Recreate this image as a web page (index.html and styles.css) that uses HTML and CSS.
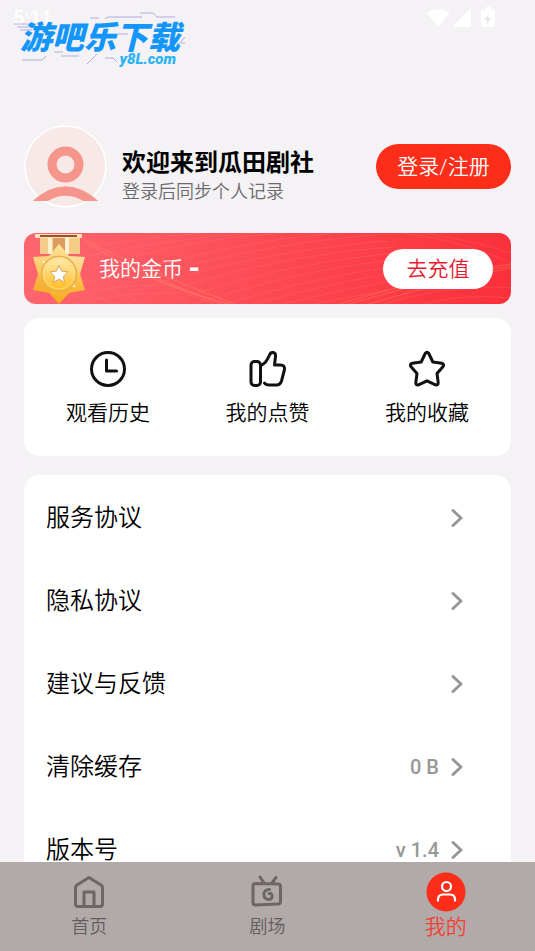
FILE: index.html
```html
<!DOCTYPE html>
<html lang="zh-CN">
<head>
<meta charset="utf-8">
<meta name="viewport" content="width=device-width, initial-scale=1">
<title>我的</title>
<link rel="stylesheet" href="styles.css">
</head>
<body>
<header class="status">
  <span class="status-time">5:11</span>
  <svg class="status-icons" width="70" height="22" viewBox="0 0 70 22" aria-hidden="true">
    <path d="M0 5Q11.500-3 23 5L11.500 19Z M44 0V19H25Z M55 2h4V-1h5v3h3q1 0 1 1v15q0 1-1 1H55q-1 0-1-1V3q0-1 1-1z" fill="#fff"/>
    <path d="M62 5l-5 7h3l-1 5 5-7h-3z" fill="#e9e7e9"/>
  </svg>
  <div class="watermark">
    <svg class="watermark-lines" width="174" height="54" viewBox="0 0 174 54" fill="none" stroke="#b3ace2" aria-hidden="true">
      <path d="M2 12h24M5 15h17M8 18h12M78 6h9M93 7l3-2h34M128 1h13l4 4h18M160 40l13-15M10 48h20l4-4M42 40h9M49 44h18M93 46h8l4 4M75 52l10-10M106 22h10M169 31h4"/>
    </svg>
    <span class="watermark-name">游吧乐下载</span>
    <span class="watermark-site">y8L.com</span>
  </div>
</header>
<main class="content">
  <section class="profile">
    <svg class="avatar" width="83" height="83" viewBox="0 0 83 83" aria-hidden="true">
      <defs><clipPath id="face"><rect width="83" height="76"/></clipPath></defs>
      <circle cx="41.500" cy="41.500" r="40.500" fill="#f8e9e9" stroke="#fff" stroke-width="1.500"/>
      <g fill="none" stroke="#f6958b">
        <circle cx="41.500" cy="39.500" r="13.500" stroke-width="9"/>
        <path d="M11 80Q41.500 52 72 80" stroke-width="9" clip-path="url(#face)"/>
      </g>
    </svg>
    <div class="profile-text">
      <h1 class="profile-title">欢迎来到瓜田剧社</h1>
      <p class="profile-note">登录后同步个人记录</p>
    </div>
    <button class="pill login" type="button">登录/注册</button>
  </section>

  <section class="coins">
    <svg class="coins-waves" viewBox="0 0 487 71" preserveAspectRatio="none" fill="none" aria-hidden="true">
      <g stroke="#ff8380" stroke-opacity=".25">
        <path d="M0 30Q90 5 180 0M0 38Q110 8 230 0M60 38Q160 5 260 0M80 46Q200 10 310 0M90 54Q220 12 350 2M110 58Q230 18 365 8M130 62Q250 22 370 14M150 67Q260 30 370 20M170 71Q270 38 365 27M200 71Q290 45 365 34M230 71Q300 52 362 41M260 71Q310 58 362 49M290 71Q330 63 365 57"/>
        <path d="M0 42Q50 52 90 71M0 50Q40 58 70 71M0 34Q70 46 120 71M60 20Q110 36 190 71M0 62Q70 42 130 44M20 71Q80 50 150 52M50 71Q100 58 160 60M380 0Q440 8 487 30M400 0Q450 8 487 20M360 71Q430 50 487 55M400 71Q440 60 487 65"/>
      </g>
      <g stroke="#ffa06c" stroke-opacity=".35">
        <path d="M58 5Q90 24 210 71M60 8Q100 35 198 71M120 42Q150 56 205 71M315 71Q420 40 487 31M325 71Q425 42 487 33M345 71Q430 46 487 35"/>
      </g>
    </svg>
    <svg class="medal" width="56" height="71" viewBox="0 0 56 71" aria-hidden="true">
      <defs>
        <linearGradient id="gold" x2="0" y2="1"><stop stop-color="#ffe39b"/><stop offset="1" stop-color="#f8aa18"/></linearGradient>
        <linearGradient id="disc" x2="0" y2="1"><stop stop-color="#ffedb5"/><stop offset="1" stop-color="#ffb91e"/></linearGradient>
      </defs>
      <path d="M9 3h40v18H9z" fill="#f5cb88"/>
      <path d="M17 3h4v18h-4zM34 3h4v18h-4z" fill="#fff1ce"/>
      <path d="M22 4h12v17H22z" fill="#dc9c61"/>
      <rect x="4" y="1" width="47" height="4" rx="1" fill="#ffe0b4"/>
      <path d="M9 2h37v2H9z" fill="#96522f"/>
      <path d="M28 11L38 23L54 24L49 41L54 57L38 60L28 71L18 60L2 57L7 41L2 24L18 23Z" fill="url(#gold)"/>
      <path d="M28 11L38 23L54 24L49 41Z" fill="#fff" opacity=".2"/>
      <path d="M28 71L18 60L2 57L7 41Z" fill="#ef9915" opacity=".25"/>
      <circle cx="28" cy="41" r="17.500" fill="url(#disc)" stroke="#e8b04f" stroke-width="1.500"/>
      <circle cx="28" cy="41" r="15" fill="none" stroke="#ffdf80"/>
      <path d="M28 32.500l2.700 5.600 6.200.8-4.500 4.300 1.100 6.100-5.500-3-5.500 3 1.100-6.100-4.500-4.300 6.200-.8z" fill="#fff" stroke="#dfa15a" stroke-linejoin="round"/>
      <circle cx="13" cy="29" r="1" fill="#fff"/><circle cx="43" cy="53" r="1" fill="#fff"/>
    </svg>
    <span class="coins-label">我的金币</span><strong class="coins-value">-</strong>
    <button class="pill recharge" type="button">去充值</button>
  </section>

  <nav class="card shortcuts">
    <a class="shortcut" href="#history">
      <svg class="line-icon" width="38" height="38" viewBox="0 0 38 38" aria-hidden="true"><circle cx="19" cy="19" r="16.500"/><path d="M17.500 10v11h10"/></svg>
      <span>观看历史</span>
    </a>
    <a class="shortcut" href="#likes">
      <svg class="line-icon" width="38" height="38" viewBox="0 0 38 38" aria-hidden="true"><rect x="2" y="11.500" width="9.500" height="24" rx="3.500"/><path d="M12 15.500c4.500-2 6.500-5.500 8.500-10.500 1.500-4 6.500-3 6 1.500L25.500 15h6c3 0 4.500 2 4 4.500L32.500 31c-1 3-2.500 4-5 4H20c-2.500 0-3.500-.5-4.500-2"/></svg>
      <span>我的点赞</span>
    </a>
    <a class="shortcut" href="#favorites">
      <svg class="line-icon" width="38" height="38" viewBox="0 0 38 38" aria-hidden="true"><path d="M17.200 3.500q1.800-2.500 3.600 0l4 8.500 9 1.300q3 .8 1.100 3.500L29 23.500l1.200 9q0 3-2.700 2.300L19 30.800l-8.500 4q-2.700.7-2.700-2.300L9 23.500l-5.900-6.700Q1.200 14.100 4.200 13.300l9-1.300z"/></svg>
      <span>我的收藏</span>
    </a>
  </nav>

  <nav class="card menu">
    <a class="row" href="#terms"><span>服务协议</span><svg class="chevron" width="12" height="20" viewBox="0 0 12 20" aria-hidden="true"><path d="M2 2.500l8 7.500-8 7.500"/></svg></a>
    <a class="row" href="#privacy"><span>隐私协议</span><svg class="chevron" width="12" height="20" viewBox="0 0 12 20" aria-hidden="true"><path d="M2 2.500l8 7.500-8 7.500"/></svg></a>
    <a class="row" href="#feedback"><span>建议与反馈</span><svg class="chevron" width="12" height="20" viewBox="0 0 12 20" aria-hidden="true"><path d="M2 2.500l8 7.500-8 7.500"/></svg></a>
    <a class="row" href="#cache"><span>清除缓存</span><span class="row-value">0 B</span><svg class="chevron" width="12" height="20" viewBox="0 0 12 20" aria-hidden="true"><path d="M2 2.500l8 7.500-8 7.500"/></svg></a>
    <a class="row" href="#version"><span>版本号</span><span class="row-value">v 1.4</span><svg class="chevron" width="12" height="20" viewBox="0 0 12 20" aria-hidden="true"><path d="M2 2.500l8 7.500-8 7.500"/></svg></a>
  </nav>
</main>
<nav class="tabs">
  <a class="tab" href="#home">
    <svg class="tab-icon" width="32" height="34" viewBox="0 0 32 34" aria-hidden="true"><path d="M2.500 12.500Q2.500 11 4 10L16 2.500 28 10q1.500 1 1.500 2.500V29q0 2.500-2.500 2.500H5Q2.500 31.500 2.500 29zM11 31V17h10v14"/></svg>
    <span>首页</span>
  </a>
  <a class="tab" href="#theater">
    <svg class="tab-icon" width="32" height="34" viewBox="0 0 32 34" aria-hidden="true"><path d="M4.500 8.500L27 9q2.500 0 2.500 2.500v15q0 2.500-2.500 2.500l-22.500 1Q2 30 2 27.500V11q0-2.500 2.500-2.500zM13 8L9 2M21 8l4-5.500"/><path d="M18.500 14.500c-7.500-.5-7 10-1 10 4 0 4.500-4 2.500-6h-2" stroke-width="3"/></svg>
    <span>剧场</span>
  </a>
  <a class="tab tab-active" href="#me" aria-current="page">
    <svg width="40" height="40" viewBox="0 0 40 40" aria-hidden="true"><circle cx="20" cy="20" r="19.500" fill="#fc2d19"/><g fill="none" stroke="#fff" stroke-width="2.200"><circle cx="20.500" cy="14.500" r="4.500"/><path d="M12 29.500v-2q0-5 5-5h7q5 0 5 5v2"/></g></svg>
    <span>我的</span>
  </a>
</nav>
</body>
</html>
```
FILE: styles.css
```css
* { box-sizing: border-box; }

body {
  margin: 0;
  height: 100vh;
  display: flex;
  flex-direction: column;
  background: #f4f2f4;
  color: #111;
  font-family: Roboto, "Noto Sans CJK SC", sans-serif;
  font-size: 21px;
  font-weight: 350;
  line-height: 30px;
}

a { color: inherit; text-decoration: none; }

.status {
  position: relative;
  flex: none;
  display: flex;
  justify-content: space-between;
  align-items: flex-start;
  height: 76px;
  padding: 8px 38px 0 13px;
}
.status-time { color: #fff; font-size: 20px; font-weight: 500; line-height: 20px; }
.status-icons { overflow: visible; }

.watermark {
  position: absolute;
  left: 12px;
  top: 12px;
  display: flex;
  flex-direction: column;
  width: 174px;
  padding: 11px 10px 0 8px;
  font-style: italic;
  font-weight: 900;
  color: #1296fb;
}
.watermark-lines { position: absolute; left: 0; top: 0; }
.watermark-name { position: relative; font-size: 32px; line-height: 30px; white-space: nowrap; }
.watermark-site {
  position: relative;
  align-self: flex-end;
  font-size: 15px;
  line-height: 12px;
  color: #2db4f4;
}

.content {
  flex: 1;
  min-height: 0;
  overflow-y: auto;
  scrollbar-width: none;
  padding: 49px 24px 0;
}

.profile { display: flex; align-items: center; gap: 15px; margin-bottom: 25px; }
.avatar { flex: none; }
.profile-text { flex: 1; padding-top: 18px; }
.profile-title { margin: 0; font-size: 24px; font-weight: 700; line-height: 32px; color: #000; }
.profile-note { margin: 0; font-size: 18px; line-height: 26px; color: #6c6a6c; }

.pill { border: 0; border-radius: 24px; padding: 0; font: inherit; }
.login { width: 135px; height: 45px; background: #fc2d19; color: #fff; }
.recharge { position: relative; width: 110px; height: 40px; margin-left: auto; background: #fff; color: #e8192f; }

.coins {
  position: relative;
  display: flex;
  align-items: center;
  height: 71px;
  margin-bottom: 14px;
  padding: 0 18px 0 7px;
  border-radius: 12px;
  overflow: hidden;
  background: linear-gradient(100deg, #fd6670, #fd4a53 50%, #fa2f39);
  color: #fff;
}
.coins-waves { position: absolute; inset: 0; width: 100%; height: 100%; }
.medal { position: relative; margin-right: 12px; }
.coins-label { position: relative; }
.coins-value { position: relative; margin-left: 5px; font-size: 28px; font-weight: 900; }

.card { background: #fff; border-radius: 15px; }

.shortcuts {
  display: flex;
  justify-content: space-between;
  margin-bottom: 19px;
  padding: 32px 42px 28px;
}
.shortcut { display: flex; flex-direction: column; align-items: center; gap: 10px; color: #000; }
.line-icon, .chevron, .tab-icon { fill: none; stroke-linecap: round; stroke-linejoin: round; }
.line-icon { stroke: #111; stroke-width: 3; }

.menu { padding: 1px 48px 24px 22px; font-size: 24px; color: #000; }
.row { display: flex; align-items: center; height: 83px; }
.chevron { margin-left: auto; stroke: #979797; stroke-width: 3; }
.row-value { margin-left: auto; font-size: 20px; font-weight: 500; color: #979797; }
.row-value + .chevron { margin-left: 12px; }

.tabs {
  flex: none;
  display: grid;
  grid-template-columns: repeat(3, 1fr);
  height: 89px;
  padding-top: 10px;
  background: #b2a9a9;
  color: #625e5e;
}
.tab { display: flex; flex-direction: column; align-items: center; font-size: 18px; }
.tab-icon { margin: 3px 0; stroke: #6b6767; stroke-width: 3; }
.tab-active { color: #f14236; font-size: 21px; }
```
